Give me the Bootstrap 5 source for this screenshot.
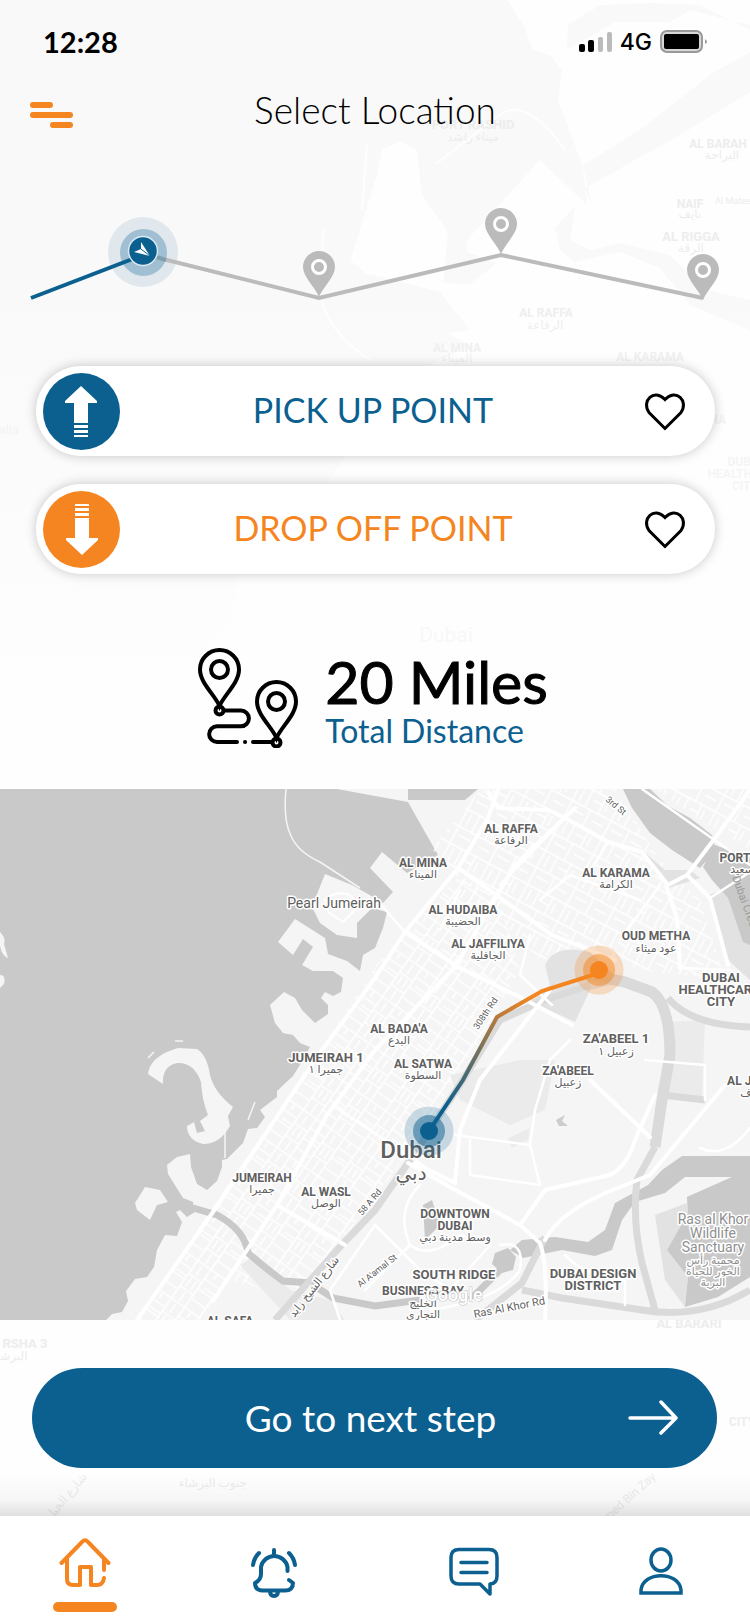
<!DOCTYPE html>
<html lang="en">
<head>
<meta charset="utf-8">
<meta name="viewport" content="width=device-width, initial-scale=1">
<title>Select Location</title>
<link href="https://cdn.jsdelivr.net/npm/bootstrap@5.3.0/dist/css/bootstrap.min.css" rel="stylesheet">
<style>
:root{--brand:#0b6090;--accent:#f58520}
body{font-family:Lato,"DejaVu Sans",sans-serif;background:#fefefe;color:#000;overflow-x:hidden}
svg{display:block}
.backdrop{position:absolute;z-index:-1;left:0;top:0;width:100%}
.status{padding:24px 42px 0 43px;height:72px}
.clock{font-size:29px;line-height:36px;font-weight:700}
.network{font:500 23px/36px Inter,sans-serif}
.topbar{display:grid;grid-template-columns:1fr auto 1fr;align-items:center;padding:12px 30px 5px;height:79px}
.page-title{font-size:37px;line-height:52px;font-weight:300;margin:0 0 10px}
.plain{border:0;background:none;padding:0;color:inherit}
.menu{width:43px}
.steps,.map,.foot-map{width:100%;height:auto}
.steps{margin-top:49px}
.pills{padding:56px 35px 0 36px;gap:28px}
.pill{height:90px;background:#fff;box-shadow:0 0 12px rgba(0,0,0,.22);padding:0 12px 0 7px}
.pick{display:grid;grid-template-columns:77px 1fr;align-items:center;font-size:34px;line-height:44px;color:var(--brand)}
.pick span{padding-bottom:2px}
.pick.drop{color:var(--accent)}
.heart{width:77px;height:77px}
.distance{padding:74px 4px 41px 0;gap:27px}
.miles{font-size:59px;line-height:64px;font-weight:400;-webkit-text-stroke:1px #000;padding-top:2px}
.total{font-size:32px;line-height:34px;color:var(--brand)}
.map text,.backdrop text,.foot-map text{font-family:Roboto,"DejaVu Sans",sans-serif;text-anchor:middle}
.place{font-size:12px;font-weight:700;fill:#606060;stroke:#fff;stroke-width:3px;paint-order:stroke;stroke-linejoin:round}
.place .ar{font-size:11px;font-weight:400}
.wide{font-size:13px}
.city{font-size:24px;font-weight:500}
.city .ar{font-size:20px}
.road-name{font-size:11px;font-weight:400}
.soft{font-weight:400;fill:#8f8f8f;font-size:14px}
.ghost{font-size:12px;font-weight:700;fill:#ededed}
.foot{position:relative;padding:48px 33px 48px 32px;background:linear-gradient(to bottom,rgba(255,255,255,0) 78%,rgba(0,0,0,.03) 92%,rgba(0,0,0,.12))}
.foot-map{position:absolute;left:0;top:0;z-index:-1}
.next{height:100px;background:var(--brand);color:#fff;font-size:37px;line-height:44px;display:grid;grid-template-columns:1fr auto 1fr;align-items:center;padding:0 38px 0 30px}
.tabs{display:grid;grid-template-columns:86fr 104fr 98fr 90fr;height:108px;background:#fff}
.tabs a{display:flex;flex-direction:column;align-items:center;padding-top:31px;color:var(--brand)}
.tabs a.active{padding-top:21px;color:var(--accent)}
.bar{width:64px;height:10px;border-radius:5px;background:var(--accent);margin-top:14px}
</style>
</head>
<body>
<svg class="backdrop" viewBox="0 0 750 789" aria-hidden="true">
  <defs><linearGradient id="fade" x1="0" y1="0" x2="0" y2="1"><stop offset=".35" stop-color="#fefefe" stop-opacity="0"/><stop offset=".88" stop-color="#fefefe"/></linearGradient></defs>
  <path fill="#f9f9f9" d="M0 0H750V789H0z"/>
  <path fill="#fefefe" d="M507 0 525 27 532 50 550 55 562 70 558 100 583 167 587 205 540 160 467 240 467 252 497 263 470 284 443 283 448 232 422 195 417 150 400 141 382 150 377 175 366 210 350 262 358 272 395 280 440 292 470 330 400 340 385 370 350 450 300 520 240 570 230 620 180 680V789H750V0z"/>
  <path fill="#f9f9f9" d="M750 30 700 5 650 3 600 5 568 25 567 50 575 45 615 22 670 22 690 10 750 25zM750 52 710 75 640 130 583 165 592 205 585 188 680 135 750 92zM575 206 555 228 560 250 575 262 620 252 660 268 690 305 750 330V300L705 290 670 255 620 243 590 250 570 240zM350 260 385 290 440 330 470 345 420 370 300 370V260z"/>
  <path fill="none" stroke="#fefefe" stroke-width="2" d="M367 145 362 210M436 164 500 115Q525 95 565 150M324 230 319 290Q325 330 370 360"/>
  <g class="ghost">
    <text x="473" y="129" class="wide">PORT RASHID</text><text x="473" y="141" font-weight="400">ميناء راشد</text>
    <text x="718" y="148">AL BARAH</text><text x="722" y="159" font-weight="400">البراحة</text>
    <text x="690" y="208">NAIF</text><text x="690" y="218" font-weight="400">نايف</text>
    <text x="733" y="204" font-size="9" font-weight="400">Al Matee</text>
    <text x="691" y="241" class="wide">AL RIGGA</text><text x="691" y="252" font-weight="400">الرقة</text>
    <text x="546" y="317">AL RAFFA</text><text x="545" y="329" font-weight="400">الرفاعة</text>
    <text x="457" y="352">AL MINA</text><text x="457" y="362" font-weight="400">الميناء</text>
    <text x="650" y="361">AL KARAMA</text>
    <text x="714" y="424">THA</text>
    <text x="745" y="466">DUBAI</text><text x="745" y="478">HEALTHCARE</text><text x="745" y="490">CITY</text>
    <text x="9" y="434" font-weight="400">alia</text>
  </g>
  <path fill="url(#fade)" d="M0 0H750V789H0z"/>
  <text x="446" y="642" font-size="21" fill="#f8f8f8">Dubai</text>
</svg>

<header>
  <div class="status d-flex justify-content-between">
    <span class="clock">12:28</span>
    <div class="d-flex align-items-start gap-2">
      <svg width="33" height="36" viewBox="0 0 33 36" aria-label="Signal"><rect x="0" y="20" width="6" height="8" rx="2"/><rect x="9" y="16" width="6" height="12" rx="2"/><rect x="19" y="13" width="5" height="15" rx="2" fill="#bbb"/><rect x="28" y="8" width="5" height="20" rx="2" fill="#bbb"/></svg>
      <span class="network">4G</span>
      <svg width="48" height="36" viewBox="0 0 48 36" aria-label="Battery"><rect x="1" y="7" width="41" height="21" rx="6" fill="#d8d8d8" stroke="#999" stroke-width="2"/><rect x="4" y="10" width="35" height="15" rx="2"/><path fill="#999" d="M45 15q4 3 0 5z"/></svg>
    </div>
  </div>
  <div class="topbar">
    <button class="plain menu" type="button" aria-label="Menu"><svg width="43" height="26" viewBox="0 0 43 26" fill="none" stroke="#f58520" stroke-width="6" stroke-linecap="round"><path d="M3 3H20M3 13H40M23 23H40"/></svg></button>
    <h1 class="page-title">Select Location</h1><span></span>
  </div>
</header>

<main>
  <svg class="steps" viewBox="0 200 750 110" aria-label="Trip progress">
    <defs><g id="pin"><path fill="#bbb" d="M0 46C-4 36-16 26-16 16a16 16 0 0 1 32 0C16 26 4 36 0 46z"/><circle cy="16" r="6.500" fill="#bbb" stroke="#fff" stroke-width="3"/></g></defs>
    <circle cx="143" cy="252" r="35" fill="#e0e8ed"/><circle cx="143.500" cy="252.500" r="23.500" fill="#a0bfd3"/>
    <path d="M143 254 319 298 501 255 703 298" fill="none" stroke="#bbb" stroke-width="4"/>
    <path d="M156 257 166 260" stroke="#7f9fb0" stroke-width="4"/>
    <path d="M31 298 143 255" stroke="#0b6090" stroke-width="4"/>
    <circle cx="143" cy="251" r="14.500" fill="#0b6090" stroke="#dce9f1" stroke-width="1.500"/>
    <path fill="#fff" d="M141 242 150 256 134 252 141 249z"/><path d="M141 249 150 256" stroke="#0b6090"/>
    <use href="#pin" x="319" y="251"/><use href="#pin" x="501" y="208"/><use href="#pin" x="703" y="254"/>
  </svg>

  <section class="pills d-flex flex-column">
    <div class="pill rounded-pill d-flex align-items-center">
      <button class="plain pick flex-grow-1" type="button"><svg width="77" height="77" viewBox="0 0 77 77"><circle cx="38.500" cy="38.500" r="38.500" fill="#0b6090"/><path fill="#fff" d="M38 13 54 28V30H45V50H31V30H22V28zM31 52h14v3H31zM31 57h14v3H31zM31 62h14v2H31z"/></svg><span>PICK UP POINT</span></button>
      <button class="plain heart d-flex align-items-center justify-content-center" type="button" aria-label="Save pick up point"><svg width="42" height="40" viewBox="0 0 42 40" fill="none" stroke="#000" stroke-width="3"><path d="M21 37.500 5 21.500C-3 10 10-3 21 8.500 32-3 45 10 37 21.500z"/></svg></button>
    </div>
    <div class="pill rounded-pill d-flex align-items-center">
      <button class="plain pick drop flex-grow-1" type="button"><svg width="77" height="77" viewBox="0 0 77 77"><circle cx="38.500" cy="38.500" r="38.500" fill="#f58520"/><path fill="#fff" d="M39 64 55 49V47H46V27H32V47H23V49zM32 22h14v3H32zM32 17h14v3H32zM32 13h14v2H32z"/></svg><span>DROP OFF POINT</span></button>
      <button class="plain heart d-flex align-items-center justify-content-center" type="button" aria-label="Save drop off point"><svg width="42" height="40" viewBox="0 0 42 40" fill="none" stroke="#000" stroke-width="3"><path d="M21 37.500 5 21.500C-3 10 10-3 21 8.500 32-3 45 10 37 21.500z"/></svg></button>
    </div>
  </section>

  <section class="distance d-flex justify-content-center align-items-center">
    <svg width="100" height="100" viewBox="0 0 100 100" fill="none" stroke="#000" stroke-width="4" stroke-linecap="round"><path d="M21.500 58C17 47 2 35 2 21.500a19.500 19.500 0 0 1 39 0C41 35 26 47 21.500 58zM78.500 90C74 79 59 67 59 53.500a19.500 19.500 0 0 1 39 0C98 67 83 79 78.500 90z"/><circle cx="21.500" cy="21.500" r="8.500"/><circle cx="78.500" cy="53.500" r="8.500"/><circle cx="21.500" cy="62.500" r="4"/><circle cx="78.500" cy="94.500" r="4"/><path d="M27 62.500H43a7.800 7.800 0 0 1 0 15.800H19a7.800 7.800 0 0 0 0 15.700H39M47 94h.1M55 94H73"/></svg>
    <div><div class="miles">20 Miles</div><div class="total">Total Distance</div></div>
  </section>

  <svg class="map" viewBox="0 789 750 531" role="img" aria-label="Route map of Dubai">
    <defs>
      <pattern id="blocks" width="46" height="34" patternUnits="userSpaceOnUse" patternTransform="rotate(-55)"><path d="M0 1H46M1 0V34M16 0V17M31 0V17M1 17H46M12 17V34M24 17V34M36 17V34M3 9H14M19 6H29M19 12H29M34 8H44M28 22V34M40 25H46" fill="none" stroke="#fff" stroke-width="1.400"/></pattern>
      <pattern id="blocks2" width="44" height="38" patternUnits="userSpaceOnUse" patternTransform="rotate(28)"><path d="M0 1H44M1 0V38M15 0V20M30 0V20M1 20H44M22 20V38M7 4V17M20 10H30M35 5V16M5 28H18M28 29H40" fill="none" stroke="#fff" stroke-width="1.400"/></pattern>
      <linearGradient id="route" gradientUnits="userSpaceOnUse" x1="530" y1="995" x2="445" y2="1105"><stop stop-color="#f58520"/><stop offset="1" stop-color="#0b6090"/></linearGradient>
    </defs>
    <path fill="#c9c9c9" d="M0 789H750V1320H0z"/>
    <path fill="#f5f5f5" d="M106 1320 112 1314 122 1312 128 1301 126 1291 135 1279 147 1277 154 1267 157 1250 165 1235 177 1236 182 1222 176 1212 180 1210 187 1217 195 1212 193 1202 183 1198 168 1174 167 1165 177 1157 190 1154 191 1167 197 1184 207 1190 217 1181 222 1167 222 1160 227 1159 243 1143 248 1129 257 1128 265 1117 260 1110 277 1097 277 1091 293 1076 303 1060 310 1047 300 1043 293 1035 283 1033 275 1023 270 1005 284 992 295 998 302 1010 315 1023 328 1014 328 1005 321 998 325 992 333 996 341 992 343 978 333 971 313 971 302 965 313 947 303 939 293 955 278 942 295 919 325 938 328 954 347 961 360 971 363 955 375 948 383 928 387 912 372 908 357 923 357 938 337 935 320 923 312 907 325 874 352 885 375 898 383 903 393 892 370 868 382 852 407 873 438 855 408 802 337 789H750V1320z"/>
    <path fill="#f5f5f5" d="M148 1074Q150 1056 178 1048L197 1049Q207 1055 210 1075 214 1092 233 1107L228 1116 230 1126Q220 1144 203 1144 187 1140 187 1126L194 1122 197 1133 205 1131 200 1121 208 1115Q202 1100 201 1082 194 1062 177 1063 162 1066 163 1084zM135 1203 145 1187 160 1190 168 1202 157 1205 150 1220 137 1210zM0 932Q6 938 4 944L8 958Q2 956 0 946zM0 975Q6 975 4 984L0 988z"/>
    <path fill="none" stroke="#f5f5f5" stroke-width="1.500" d="M286 789Q283 820 291 836 298 852 320 862L360 888M221 1119 225 1133V1158M175 1041H183M148 1058 154 1052M255 1102 248 1120"/>
    <path fill="url(#blocks)" d="M137 1320 265 1130 312 1060 380 960 460 875 500 900 520 970 480 1040 410 1150 350 1230 300 1300 230 1280 200 1320z"/>
    <path fill="url(#blocks2)" d="M430 850 480 790 615 789 660 860 700 900 725 980 640 970 590 950 540 960zM655 789H750V850L715 830z"/>
    <path fill="#ebebeb" d="M450 1075 520 1060 555 1060 545 1110 510 1125 460 1100zM668 1022 705 1020 702 1100 665 1095zM508 1138 530 1128 528 1140 512 1148zM255 1255 290 1290 330 1300 345 1320H290L240 1265z"/>
    <path fill="#e2e2e2" d="M545 965Q555 943 590 952L622 982 590 990 575 1022 545 1008 525 1002 550 985zM642 850 665 870 690 870 700 878 668 888zM708 895 728 888 750 945V980L728 960zM695 1200 732 1177 687 1197 688 1213 667 1250 688 1277 685 1307 665 1280 655 1215z"/>
    <path fill="#c9c9c9" d="M408 789H478L465 800H408zM623 789H650L668 806 690 818 712 835 716 850 700 868 672 850 650 833 632 808zM703 867 715 845 750 858V945L743 942 728 898 712 880zM750 1156H682L662 1170 648 1185 615 1203 605 1230 588 1242 555 1237 522 1240 510 1250 523 1258 562 1250 595 1256 612 1250 622 1220 635 1202 665 1193 685 1177 732 1177 687 1197 688 1213 667 1250 688 1277 685 1307 718 1297 750 1277zM495 1253 508 1248 516 1257 513 1270 502 1273 492 1264zM423 1205 432 1200 440 1225 425 1240z"/>
    <path fill="none" stroke="#c9c9c9" stroke-width="7" d="M193 1208 217 1215Q245 1230 248 1253 265 1268 283 1281L310 1283 333 1298 375 1306 420 1300M470 1300 500 1270"/>
    <g fill="none" stroke="#dadada" stroke-linejoin="round">
      <path stroke-width="11" d="M590 975 625 982 652 992Q670 1005 670 1055L662 1100 655 1147"/>
      <path stroke-width="7" d="M655 1147 637 1180Q632 1220 642 1263L655 1310M668 998Q690 1025 750 1027M275 1320 337 1250 375 1210 408 1163 463 1080 500 1020 545 1000 590 985M545 1237 522 1283 475 1320M522 1290 562 1298 642 1310Q700 1320 750 1290M662 1095 705 1100"/>
    </g>
    <g fill="none" stroke="#fff" stroke-linejoin="round" stroke-linecap="round">
      <path stroke-width="4" d="M137 1320 220 1202 317 1057 375 978 405 932 458 868 488 818 498 789M213 1301 277 1205 327 1115 375 1050 455 967 515 865 575 808M458 868 492 892 552 935 615 960M405 932 458 967 522 998 572 1025M488 792 498 808 548 810 565 818 608 842 642 852 668 885 687 875 715 838 750 790M667 888 677 918 680 968M687 875 710 898 728 965M408 1163 450 1187 520 1225 540 1243Q548 1265 545 1320M415 1163 455 1183 460 1130 480 1080 550 990M520 1225 545 1190 610 1175Q628 1165 635 1140L655 1095M545 1240Q560 1210 620 1187L650 1175 725 1085M590 1080 650 1137M277 1205 345 1245"/>
      <path stroke-width="2.500" d="M375 898 405 932M335 1107 430 1170M460 890 440 930M565 818 500 885M608 842 585 880M540 900 570 875 640 900M530 935 520 975 552 1005M660 885 620 940M642 789 750 865M750 872 710 898M680 968 730 970M455 1135 530 1145 540 1185M530 1145 535 1110 550 1060 570 1040M470 1140V1175L540 1185M645 1060 705 1065V1100M750 1128Q725 1160 700 1148M565 1255Q590 1280 625 1280V1305M420 1185Q395 1210 410 1245 430 1260 460 1235L490 1245 450 1290M375 1225 420 1270 450 1290M410 1245 365 1290M500 1245Q525 1240 520 1270 500 1300 430 1310M340 1320 330 1290 375 1225"/>
    </g>
    <path fill="none" stroke="#fff" stroke-width="2" d="M325 900Q335 890 350 895L360 905 343 922 328 912z"/>
    <path fill="#ccc" d="M556 1120 565 1115 562 1121 568 1126H559z"/>
    <g fill-opacity=".25"><circle cx="599" cy="970" r="24.500" fill="#f58520"/></g>
    <circle cx="599" cy="970" r="16" fill="#f58520" fill-opacity=".48"/>
    <g class="place">
      <text x="511" y="833">AL RAFFA<tspan class="ar" x="511" dy="11">الرفاعة</tspan></text>
      <text x="423" y="867">AL MINA<tspan class="ar" x="423" dy="11">الميناء</tspan></text>
      <text x="616" y="877">AL KARAMA<tspan class="ar" x="616" dy="11">الكرامة</tspan></text>
      <text x="463" y="914">AL HUDAIBA<tspan class="ar" x="463" dy="11">الحضيبة</tspan></text>
      <text x="488" y="948">AL JAFFILIYA<tspan class="ar" x="488" dy="11">الجافلية</tspan></text>
      <text x="656" y="940">OUD METHA<tspan class="ar" x="656" dy="12">عود ميثاء</tspan></text>
      <text x="740" y="862">PORT S<tspan class="ar" x="742" dy="11">سعيد</tspan></text>
      <text x="334" y="908" style="font-weight:400;font-size:14px">Pearl Jumeirah</text>
      <g class="wide"><text x="721" y="982">DUBAI<tspan x="719" dy="12">HEALTHCARE</tspan><tspan x="721" dy="12">CITY</tspan></text>
      <text x="326" y="1062">JUMEIRAH 1<tspan class="ar" x="326" dy="11">جميرا ١</tspan></text>
      <text x="616" y="1043">ZA'ABEEL 1<tspan class="ar" x="616" dy="12">زعبيل ١</tspan></text>
      <text x="454" y="1279">SOUTH RIDGE</text>
      <text x="593" y="1278">DUBAI DESIGN<tspan x="593" dy="12">DISTRICT</tspan></text></g>
      <text x="399" y="1033">AL BADA'A<tspan class="ar" x="399" dy="11">البدع</tspan></text>
      <text x="423" y="1068">AL SATWA<tspan class="ar" x="423" dy="11">السطوة</tspan></text>
      <text x="568" y="1075">ZA'ABEEL<tspan class="ar" x="568" dy="11">زعبيل</tspan></text>
      <text x="751" y="1085">AL JADD<tspan class="ar" x="757" dy="11">الجداف</tspan></text>
      <text x="262" y="1182">JUMEIRAH<tspan class="ar" x="262" dy="11">جميرا</tspan></text>
      <text x="326" y="1196">AL WASL<tspan class="ar" x="326" dy="11">الوصل</tspan></text>
      <text x="455" y="1218">DOWNTOWN<tspan x="455" dy="12">DUBAI</tspan><tspan class="ar" x="455" dy="11">وسط مدينة دبي</tspan></text>
      <text x="423" y="1295">BUSINESS BAY<tspan class="ar" x="423" dy="12">الخليج</tspan><tspan class="ar" x="423" dy="11">التجاري</tspan></text>
      <text x="230" y="1325">AL SAFA</text>
      <text class="city" x="411" y="1158">Dubai<tspan class="ar" x="411" dy="22">دبي</tspan></text>
      <text class="soft" x="713" y="1224">Ras al Khor<tspan x="713" dy="14">Wildlife</tspan><tspan x="713" dy="14">Sanctuary</tspan><tspan class="ar" x="713" dy="12">محمية رأس</tspan><tspan class="ar" x="713" dy="11">الخور للحياة</tspan><tspan class="ar" x="713" dy="11">البرية</tspan></text>
      <g class="road-name">
        <text style="font-size:9px" transform="translate(614 808) rotate(40)">3rd St</text>
        <text style="font-size:9px" transform="translate(488 1015) rotate(-56)">308th Rd</text>
        <text style="font-size:9px" transform="translate(372 1204) rotate(-50)">58 A Rd</text>
        <text style="font-size:9px" transform="translate(379 1273) rotate(-38)">Al A'amal St</text>
        <text transform="translate(317 1289) rotate(-52)">شارع الشيخ زايد</text>
        <text transform="translate(510 1311) rotate(-11)">Ras Al Khor Rd</text>
        <text style="fill:#999;stroke:none" transform="translate(742 905) rotate(70)">Dubai Creek</text>
      </g>
      <text x="454" y="1301" style="font-size:18px;font-weight:500;fill:#fff;stroke:#bbb;stroke-width:1px">Google</text>
    </g>
    <circle cx="429" cy="1131" r="24.500" fill="#0b6090" fill-opacity=".2"/>
    <circle cx="429" cy="1131" r="16" fill="#0b6090" fill-opacity=".5"/>
    <path d="M599 973 542 991 497 1017 463 1080 429 1131" fill="none" stroke="url(#route)" stroke-width="4"/>
    <circle cx="599" cy="970" r="9" fill="#f58520"/><circle cx="429" cy="1131" r="9" fill="#0b6090"/>
  </svg>

  <section class="foot">
    <svg class="foot-map ghost" viewBox="0 1320 750 196" aria-hidden="true">
      <text x="689" y="1328" class="wide">AL BARARI</text><text x="25" y="1348" class="wide">RSHA 3</text><text x="12" y="1360" font-weight="400">البرشا</text><text x="742" y="1426">CITY</text>
      <text x="213" y="1487" font-weight="400">جنوب البرشاء</text><text transform="translate(632 1500) rotate(-42)" font-weight="400">med Bin Zay</text><text transform="translate(69 1499) rotate(-50)" font-weight="400">شارع الخيل</text>
    </svg>
    <button class="next plain w-100 rounded-pill" type="button"><span></span><span>Go to next step</span><svg class="ms-auto" width="51" height="36" viewBox="0 0 51 36" fill="none" stroke="#fff" stroke-width="3.500" stroke-linecap="round" stroke-linejoin="round"><path d="M2 18H48M33 2 48 18 33 33"/></svg></button>
  </section>
</main>

<nav class="tabs" aria-label="Main">
  <a href="#home" class="active" aria-label="Home"><svg width="52" height="51" viewBox="0 0 52 51" fill="none" stroke="currentColor" stroke-width="4" stroke-linecap="round" stroke-linejoin="round"><path d="M2.500 26 23 5Q26 1.500 29 5L49.500 26M8 22V42Q8 48 14 48H21V30H32V48H38Q44 48 45 41M45 22V33"/></svg><span class="bar"></span></a>
  <a href="#alerts" aria-label="Notifications"><svg width="46" height="52" viewBox="0 0 46 52" fill="none" stroke="currentColor" stroke-width="4" stroke-linecap="round" stroke-linejoin="round"><path d="M23 3V7M2 18Q3 11 8 6M44 18Q43 11 38 6M36.500 24V20A13.500 13.500 0 0 0 10 20V27Q10 33 4 36 4 43.500 12 43.500H34Q42 43.500 42 36L38 33M19 44Q19 49 23 49T27 44"/></svg></a>
  <a href="#messages" aria-label="Messages"><svg width="50" height="50" viewBox="0 0 50 50" fill="none" stroke="currentColor" stroke-width="3.500" stroke-linecap="round" stroke-linejoin="round"><path d="M10 2.500H40Q48 2.500 48 10.500V29Q48 36.500 41 37V47L31 37H10Q2 37 2 29V10.500Q2 2.500 10 2.500zM12 15.500H38M12 25.500H38"/></svg></a>
  <a href="#profile" aria-label="Profile"><svg width="44" height="50" viewBox="0 0 44 50" fill="none" stroke="currentColor" stroke-width="3.500"><ellipse cx="22" cy="13" rx="10" ry="11"/><path d="M2 46V43C4 24 40 24 42 43V46z"/></svg></a>
</nav>
<script src="https://cdn.jsdelivr.net/npm/bootstrap@5.3.0/dist/js/bootstrap.bundle.min.js"></script>
</body>
</html>
